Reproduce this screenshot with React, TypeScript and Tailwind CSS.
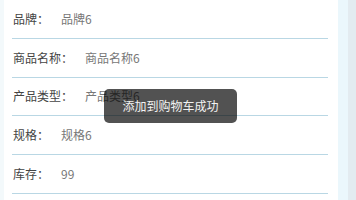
import React from "react";

const rows = [
  { label: "品牌：", value: "品牌6" },
  { label: "商品名称：", value: "商品名称6" },
  { label: "产品类型：", value: "产品类型6" },
  { label: "规格：", value: "规格6" },
  { label: "库存：", value: "99" },
];

export default function App() {
  return (
    <div
      className="relative w-[356px] h-[200px] overflow-hidden flex bg-white"
      style={{ fontFamily: '"Noto Sans CJK SC", "Noto Sans", sans-serif' }}
    >
      <div className="w-[4px] h-full bg-[#f3f9fb]" />
      <div className="flex-1 h-full bg-white pl-[8px] pr-[10px] flex flex-col">
        {rows.map((r) => (
          <div
            key={r.label}
            className="h-[38.75px] shrink-0 flex items-center border-b border-[#b9d7e4] text-[12px] leading-none"
          >
            <span className="pl-[1px] text-[#444] mr-[12px]">{r.label}</span>
            <span className="text-[#777]">{r.value}</span>
          </div>
        ))}
      </div>
      <div className="w-[10px] h-full bg-[#ebf7fc]" />
      <div className="w-[8px] h-full bg-[#e3ebf0]" />
      <div className="absolute left-[104px] top-[89px] w-[133px] h-[34px] rounded-[5px] bg-[rgba(0,0,0,0.68)] flex items-center justify-center text-[12px] text-[#f2f2f2] leading-none">
        添加到购物车成功
      </div>
    </div>
  );
}
